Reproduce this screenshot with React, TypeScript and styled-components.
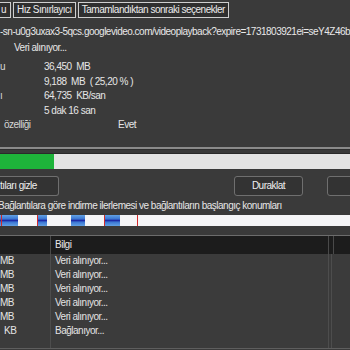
import React from "react";
import styled, { createGlobalStyle } from "styled-components";

const GlobalStyle = createGlobalStyle`
  html, body {
    margin: 0;
    padding: 0;
    background: #3a3a3a;
  }
  body {
    width: 350px;
    height: 350px;
    overflow: hidden;
    font-family: "Liberation Sans", Arial, sans-serif;
    font-size: 10px;
    letter-spacing: -0.5px;
    color: #e4e4e4;
  }
`;

const segments = [
  { left: 0, width: 18 },
  { left: 37, width: 10 },
  { left: 71, width: 14 },
  { left: 104, width: 16 },
];
const markers = [1, 37, 104, 137];

const stats = [
  { label: "u", value: "36,450  MB" },
  { label: "", value: "9,188  MB  ( 25,20 % )" },
  { label: "ı", value: "64,735  KB/san" },
  { label: "", value: "5 dak 16 san" },
];

const sizes = ["MB", "MB", "MB", "MB", "MB", "KB"];
const infos = [
  "Veri alınıyor...",
  "Veri alınıyor...",
  "Veri alınıyor...",
  "Veri alınıyor...",
  "Veri alınıyor...",
  "Bağlanıyor...",
];

const App = () => {
  const progress = 54;

  return (
    <Window>
      <GlobalStyle />
      <TabBar>
        <Tab $cut>u</Tab>
        <Tab>Hız Sınırlayıcı</Tab>
        <Tab>Tamamlandıktan sonraki seçenekler</Tab>
      </TabBar>

      <UrlLine>-sn-u0g3uxax3-5qcs.googlevideo.com/videoplayback?expire=1731803921ei=seY4Z46bA</UrlLine>
      <StatusLine>Veri alınıyor...</StatusLine>

      <Stats>
        {stats.map((s, i) => (
          <StatRow key={i}>
            <StatLabel>{s.label}</StatLabel>
            <StatValue>{s.value}</StatValue>
          </StatRow>
        ))}
        <ResumeRow>
          <StatLabel>özelliği</StatLabel>
          <StatValue>Evet</StatValue>
        </ResumeRow>
      </Stats>

      <Divider />

      <ProgressTrack>
        <ProgressFill style={{ width: progress }} />
      </ProgressTrack>

      <ButtonRow>
        <Button $cut>tıları gizle</Button>
        <Spacer />
        <Button>Duraklat</Button>
        <Button>İptal</Button>
      </ButtonRow>

      <Caption>Bağlantılara göre indirme ilerlemesi ve bağlantıların başlangıç konumları</Caption>
      <SegmentBar>
        {segments.map((s, i) => (
          <Segment key={i} style={{ left: s.left, width: s.width }} />
        ))}
        {markers.map((m) => (
          <Marker key={m} style={{ left: m }} />
        ))}
      </SegmentBar>

      <Table>
        <HeaderRow>
          <HeadCell />
          <HeadCell>Bilgi</HeadCell>
          <HeadCell />
          <HeadCell $last />
        </HeaderRow>
        <Body>
          <Column $width={51}>
            {sizes.map((s, i) => (
              <SizeCell key={i} $shift={s === "KB"}>
                {s}
              </SizeCell>
            ))}
          </Column>
          <Column $width={278}>
            {infos.map((t, i) => (
              <InfoCell key={i}>{t}</InfoCell>
            ))}
          </Column>
          <Column $width={3} />
          <Column $width={20} $last />
        </Body>
      </Table>
    </Window>
  );
};

export default App;

const Window = styled.div`
  width: 350px;
  height: 350px;
  display: flex;
  flex-direction: column;
  overflow: hidden;
  background: #3a3a3a;
`;

const TabBar = styled.div`
  display: flex;
  gap: 2px;
  height: 19px;
  padding-top: 2px;
  box-sizing: border-box;
`;

const Tab = styled.div<{ $cut?: boolean }>`
  height: 16px;
  box-sizing: border-box;
  border: 1px solid #cfcfcf;
  border-left: ${(p) => (p.$cut ? "none" : "1px solid #cfcfcf")};
  padding: ${(p) => (p.$cut ? "0 4px 0 1px" : "0 3px")};
  line-height: 14px;
  background: #2f2f2f;
  color: #ececec;
  white-space: nowrap;
`;

const UrlLine = styled.div`
  margin-top: 6px;
  height: 14px;
  line-height: 14px;
  white-space: nowrap;
  color: #e8e8e8;
`;

const StatusLine = styled.div`
  margin-top: 2px;
  height: 14px;
  line-height: 14px;
  padding-left: 14px;
  color: #e8e8e8;
`;

const Stats = styled.div`
  margin-top: 5px;
  display: flex;
  flex-direction: column;
`;

const StatRow = styled.div`
  display: grid;
  grid-template-columns: 44px 1fr;
  height: 14.5px;
  line-height: 14.5px;
`;

const ResumeRow = styled(StatRow)`
  grid-template-columns: 118px 1fr;
  & > div:first-child {
    padding-left: 4px;
  }
`;

const StatLabel = styled.div`
  color: #d6d6d6;
  white-space: nowrap;
`;

const StatValue = styled.div`
  color: #e6e6e6;
  white-space: pre;
`;

const Divider = styled.div`
  margin-top: 14px;
  height: 2px;
  background: #8a8a8a;
  border-bottom: 1px solid #2e2e2e;
`;

const ProgressTrack = styled.div`
  margin-top: 3px;
  height: 15px;
  background: #e4e4e4;
  border-top: 1px solid #2a2a2a;
  display: flex;
`;

const ProgressFill = styled.div`
  height: 100%;
  background: #1eb43a;
`;

const ButtonRow = styled.div`
  margin-top: 7px;
  width: 396px;
  display: flex;
  gap: 24px;
`;

const Spacer = styled.div`
  flex: 1;
`;

const Button = styled.div<{ $cut?: boolean }>`
  width: ${(p) => (p.$cut ? "59px" : "69px")};
  height: 20px;
  box-sizing: border-box;
  border: 1px solid #6f6f6f;
  border-left: ${(p) => (p.$cut ? "none" : "1px solid #6f6f6f")};
  border-radius: ${(p) => (p.$cut ? "0 3px 3px 0" : "3px")};
  background: #333333;
  color: #f0f0f0;
  line-height: 18px;
  text-align: ${(p) => (p.$cut ? "left" : "center")};
  white-space: nowrap;
`;

const Caption = styled.div`
  margin-top: 3px;
  height: 14px;
  line-height: 14px;
  white-space: nowrap;
  margin-left: -2px;
  color: #e6e6e6;
`;

const SegmentBar = styled.div`
  position: relative;
  margin-top: 2px;
  height: 11px;
  background: #f5f5f7;
`;

const Segment = styled.div`
  position: absolute;
  top: 0;
  bottom: 0;
  background: linear-gradient(
    to bottom,
    #63a2e4 0%,
    #3c78d4 35%,
    #1c2aa6 50%,
    #3c78d4 65%,
    #63a2e4 100%
  );
`;

const Marker = styled.div`
  position: absolute;
  top: 0;
  bottom: 0;
  width: 1px;
  background: #d42a2a;
`;

const Table = styled.div`
  margin-top: 9px;
  height: 112px;
  border-top: 1px solid #6c6c6c;
  border-bottom: 1px solid #5e5e5e;
  display: flex;
  flex-direction: column;
`;

const HeaderRow = styled.div`
  display: grid;
  grid-template-columns: 51px 278px 3px 1fr;
  height: 18px;
  background: #1c1c1c;
`;

const HeadCell = styled.div<{ $last?: boolean }>`
  border-right: ${(p) => (p.$last ? "none" : "1px solid #4a4a4a")};
  padding-left: 4px;
  line-height: 18px;
  color: #e8e8e8;
`;

const Body = styled.div`
  flex: 1;
  display: flex;
  background: #3b3b3b;
`;

const Column = styled.div<{ $width: number; $last?: boolean }>`
  width: ${(p) => p.$width}px;
  flex: ${(p) => (p.$last ? "1" : "none")};
  border-right: ${(p) => (p.$last ? "none" : "1px solid #4d4d4d")};
  box-sizing: border-box;
  display: flex;
  flex-direction: column;
`;

const SizeCell = styled.div<{ $shift?: boolean }>`
  height: 14px;
  line-height: 14px;
  padding-left: ${(p) => (p.$shift ? "4px" : "0")};
  color: #e4e4e4;
`;

const InfoCell = styled.div`
  height: 14px;
  line-height: 14px;
  padding-left: 4px;
  color: #e4e4e4;
  white-space: nowrap;
`;
